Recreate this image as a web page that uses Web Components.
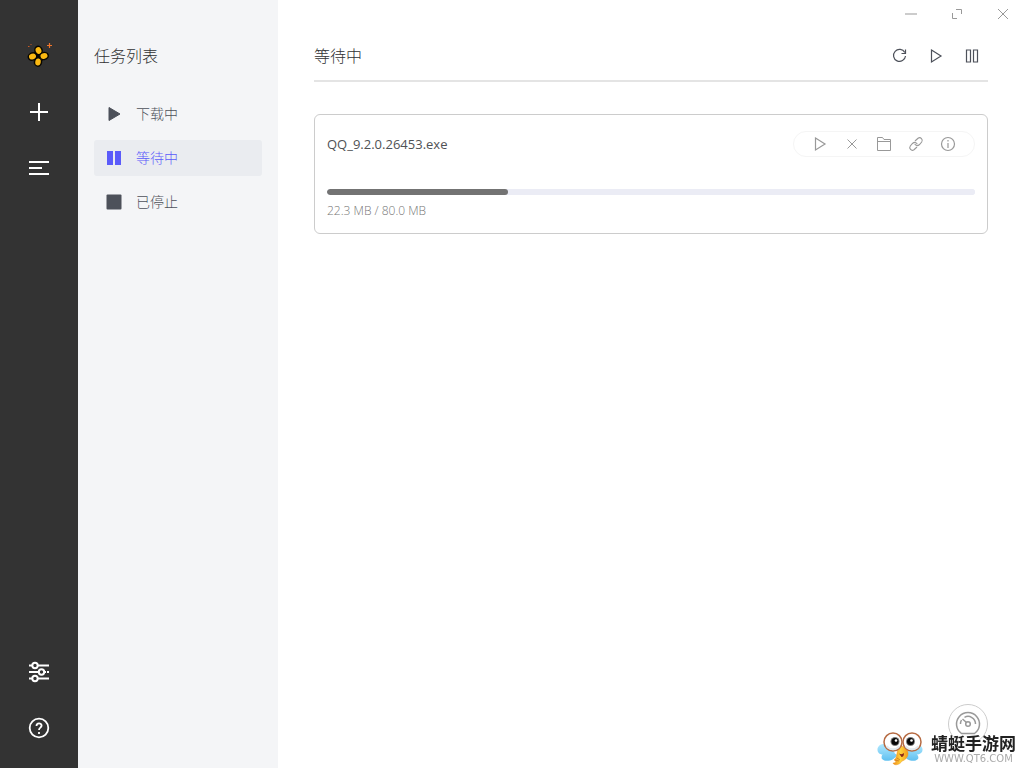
<!DOCTYPE html>
<html lang="zh-CN">
<head>
<meta charset="utf-8">
<title>任务列表</title>
<style>
html, body { margin: 0; height: 100%; }
body { font-family: "Noto Sans", "Noto Sans CJK SC", sans-serif; color: #303133; background: #fff; }
</style>
</head>
<body>
<download-app></download-app>
<script>
const svg = (size, body) =>
  `<svg width="${size}" height="${size}" viewBox="0 0 ${size} ${size}" fill="none" stroke="currentColor" aria-hidden="true">${body}</svg>`;
const base = `*{box-sizing:border-box}
button{font:inherit;color:inherit;background:none;border:0;padding:0;margin:0;display:flex;align-items:center;justify-content:center;cursor:pointer}
svg{display:block;flex:none}`;
const define = (name, css, html) => {
  customElements.define(name, class extends HTMLElement {
    connectedCallback() {
      if (this.shadowRoot) return;
      const root = this.attachShadow({ mode: 'open' });
      root.innerHTML = `<style>${base}${css}</style>${typeof html === 'function' ? html(this) : html}`;
    }
  });
};

const icons = {
  logo: svg(28, `<path d="M10 10L17 19M9 18L18 11" stroke="#080600" stroke-width="2.500"/>
    <g fill="#fbb912" stroke="#080600" stroke-width="1.500">
    <ellipse cx="13.500" cy="8.500" rx="3.600" ry="4.200" transform="rotate(-20 13.500 8.500)"/>
    <ellipse cx="19" cy="14" rx="4.300" ry="3.500" transform="rotate(-15 19 14)"/>
    <ellipse cx="13" cy="20" rx="3.500" ry="4.200" transform="rotate(10 13 20)"/>
    <ellipse cx="7.500" cy="14.500" rx="4.300" ry="3.600" transform="rotate(-20 7.500 14.500)"/></g>
    <path d="M24.500 1v5M22 3.500h5" stroke="#f0762b" stroke-width="1.200"/><path d="M3 4.500h1.500M5.500 2.500h1" stroke="#c95a24"/>`),
  plus: svg(24, `<path d="M12 3v18M3 12h18" stroke-width="2"/>`),
  list: svg(24, `<path d="M2 6h20M2 12h13M2 18h20" stroke-width="2"/>`),
  sliders: svg(24, `<g stroke-width="2"><path d="M2 5.500h3M11 5.500h11M2 12h10M18 12h1M20 12h2M2 18.500h3M11 18.500h11"/><circle cx="8" cy="5.500" r="2.700"/><circle cx="14.500" cy="12" r="2.700"/><circle cx="8" cy="18.500" r="2.700"/></g>`),
  help: svg(24, `<g stroke-width="1.800"><circle cx="12" cy="12" r="9.300"/><path d="M9.500 10C9.500 6.500 14.600 6.700 14.600 9.600C14.600 11.700 12 11.500 12 14"/><path d="M12 16v2"/></g>`),
  solidPlay: svg(16, `<path d="M3 1.500L14 8L3 14.500Z" fill="currentColor" stroke-linejoin="round"/>`),
  solidPause: svg(16, `<path d="M1 1h6v14h-6ZM9 1h6v14h-6Z" fill="currentColor" stroke="none"/>`),
  solidStop: svg(16, `<rect x=".5" y=".5" width="15" height="15" rx="1" fill="currentColor" stroke="none"/>`),
  refresh: svg(16, `<path d="M12.800 4.500A6 6 0 1 0 13.500 8M13.500 1.500V5.500H9.500" stroke-width="1.200"/>`),
  play: svg(16, `<path d="M3.500 2L13 8L3.500 14Z" stroke-width="1.200"/>`),
  pause: svg(16, `<path d="M2.500 2h4v12h-4ZM9.500 2h4v12h-4Z" stroke-width="1.200"/>`),
  cross: svg(16, `<path d="M3.500 3.500l9 9M12.500 3.500l-9 9"/>`),
  folder: svg(16, `<path d="M1.500 14.500V1.500H6.500L8 3.500H14.500V14.500ZM1.500 5.500H14.500"/>`),
  link: svg(16, `<path d="M7 5L10 2.300C12.500 .5 15.500 3.500 13.700 6L11.500 8.500C9.500 10.500 7.500 9.500 6.700 7.800M9 11L6 13.700C3.500 15.500 .5 12.500 2.300 10L4.500 7.500C6.500 5.500 8.500 6.500 9.300 8.200" stroke-width="1.100"/>`),
  info: svg(16, `<circle cx="8" cy="8" r="6.500" stroke-width="1.200"/><path d="M8 7v5M8 4v1.500" stroke-width="1.200"/>`),
  min: svg(12, `<path d="M0 6h12" stroke-width="2" opacity=".5"/>`),
  max: svg(12, `<path d="M5 1.500H10.500V6M1.500 5V10.500H6"/>`),
  close: svg(12, `<path d="M1 1l10 10M11 1L1 11"/>`),
  gauge: svg(28, `<g stroke-width="1.500"><path d="M7.500 23.500A11.500 11.500 0 1 1 20.500 23.500Z"/><path d="M6.500 14A7.500 7.500 0 0 1 7.500 10M10.500 7.300A7.500 7.500 0 0 1 21.500 14M8.500 9L12.500 12.500"/><circle cx="14" cy="14" r="2.300"/></g>`)
};

define('icon-button', `:host{display:block;height:24px}button{width:100%;height:100%}`,
  el => `<button type="button" aria-label="${el.getAttribute('label')}" title="${el.getAttribute('label')}">${icons[el.getAttribute('icon')]}</button>`);

define('app-rail', `:host{display:flex;flex-direction:column;justify-content:space-between;background:#333;color:#fff;padding:44px 0 28px}
nav{display:grid;gap:32px}`,
  `<nav aria-label="主菜单"><icon-button icon="logo" label="主页"></icon-button><icon-button icon="plus" label="新建任务"></icon-button><icon-button icon="list" label="任务"></icon-button></nav>
  <nav aria-label="设置"><icon-button icon="sliders" label="偏好设置"></icon-button><icon-button icon="help" label="帮助"></icon-button></nav>`);

define('nav-item', `:host{display:block}
a{display:flex;align-items:center;gap:14px;height:36px;padding:0 12px;border-radius:3px;font-size:14px;line-height:18px;font-weight:300;color:#4d515a;text-decoration:none}
:host([active]) a{background:#eaecf0;color:#5b5bfa}`,
  el => `<a href="#${el.getAttribute('to')}" ${el.hasAttribute('active') ? 'aria-current="page"' : ''}>${icons[el.getAttribute('icon')]}<slot></slot></a>`);

define('task-sidebar', `:host{display:block;background:#f4f5f7;padding:44px 16px}
h2{margin:0 0 28px;font-size:16px;line-height:24px;font-weight:300}nav{display:grid;gap:8px}`,
  `<h2>任务列表</h2><nav><nav-item to="active" icon="solidPlay">下载中</nav-item><nav-item to="waiting" icon="solidPause" active>等待中</nav-item><nav-item to="stopped" icon="solidStop">已停止</nav-item></nav>`);

define('window-controls', `:host{display:flex;justify-content:flex-end;gap:4px;height:28px;color:#999}icon-button{width:42px;height:28px}`,
  `<icon-button icon="min" label="最小化"></icon-button><icon-button icon="max" label="最大化"></icon-button><icon-button icon="close" label="关闭"></icon-button>`);

define('panel-header', `:host{display:flex;justify-content:space-between;padding:16px 0 12px;border-bottom:2px solid #e4e4e4}
h1{margin:0;font-size:16px;line-height:24px;font-weight:300}div{display:flex;gap:4px;color:#4d515a}icon-button{width:32px}`,
  `<h1><slot></slot></h1><div><icon-button icon="refresh" label="刷新"></icon-button><icon-button icon="play" label="全部开始"></icon-button><icon-button icon="pause" label="全部暂停"></icon-button></div>`);

define('task-card', `:host{display:block;border:1px solid #ccc;border-radius:6px;padding:16px 12px 14px}
header{display:flex;justify-content:space-between;align-items:center}
h3{margin:0;font:400 13px/26px "Open Sans",sans-serif;color:#505255}
.actions{display:flex;align-items:center;height:26px;padding:0 10px;border:1px solid #f5f5f5;border-radius:13px;color:#999}
icon-button{width:32px}
progress{display:block;width:100%;height:6px;margin:32px 0 8px;appearance:none;border:0;border-radius:3px;overflow:hidden;background:#ebecf5}
progress::-webkit-progress-bar{background:#ebecf5;border-radius:3px}
progress::-webkit-progress-value{background:#737373;border-radius:3px}
p{margin:0;font:300 12px/16px "Open Sans",sans-serif;color:#777}`,
  el => `<header><h3><slot></slot></h3><div class="actions"><icon-button icon="play" label="开始"></icon-button><icon-button icon="cross" label="删除"></icon-button><icon-button icon="folder" label="打开文件夹"></icon-button><icon-button icon="link" label="复制链接"></icon-button><icon-button icon="info" label="详情"></icon-button></div></header>
  <progress aria-label="下载进度" max="${el.getAttribute('total')}" value="${el.getAttribute('done')}"></progress>
  <p>${el.getAttribute('done')} MB / ${el.getAttribute('total')} MB</p>`);

define('speed-button', `:host{display:block;width:40px;height:40px;position:fixed;right:36px;bottom:24px}
button{width:40px;height:40px;border:1px solid #ccc;border-radius:50%;color:#999;background:#fff}`,
  `<button type="button" aria-label="速度">${icons.gauge}</button>`);

define('site-mark', `:host{position:fixed;right:8px;bottom:2px;display:flex;align-items:center;gap:8px}
.words{display:grid;justify-items:center}
b{font:700 17px/20px "Noto Sans CJK SC",sans-serif;color:#222}
small{font:10px/12px "DejaVu Sans",sans-serif;color:#aaa}`,
  `<svg width="46" height="34" viewBox="0 0 46 34" aria-hidden="true">
  <defs><linearGradient id="w" x2="0" y2="1"><stop stop-color="#b2e9ff"/><stop offset="1" stop-color="#5fc0f0"/></linearGradient><linearGradient id="t"><stop stop-color="#ee8618"/><stop offset=".5" stop-color="#ffd33b"/><stop offset="1" stop-color="#f49a1b"/></linearGradient></defs>
  <path d="M9 12C3 11 -1 16 1 20C3 24 12 24 18 21ZM16 20C8 19 3 23 5 27C9 31 18 28 20 23ZM37 12C43 11 47 16 45 20C42 24 34 23 28 21ZM29 20C37 19 43 23 41 27C37 31 29 28 26 23Z" fill="url(#w)"/>
  <path d="M21 15C23 13 27 14 30 18C33 23 29 28 25 29C23 33 17 34 16 31C19 31 20 29 17 28C20 27 20 20 21 15Z" fill="url(#t)" stroke="#ec9820" stroke-width=".5"/>
  <path d="M18 28l4 1M20 26l3 2" stroke="#c97520" stroke-width=".8"/><path d="M22 21.500Q25 23 27 21Q27 25 24.500 25Z" fill="#8c2818"/>
  <circle cx="16" cy="10" r="9" fill="#fff" stroke="#b66b43" stroke-width="1.500"/><circle cx="35" cy="10" r="9" fill="#fff" stroke="#b66b43" stroke-width="1.500"/>
  <path d="M9.500 14A8 8 0 0 0 22.500 14M28.500 14A8 8 0 0 0 41.500 14" fill="none" stroke="#e2eaef" stroke-width="2"/>
  <circle cx="18" cy="9.500" r="4.500" fill="#777"/><circle cx="33.500" cy="9.500" r="4.500" fill="#777"/><circle cx="18" cy="9.500" r="3.500" fill="#080808"/><circle cx="33.500" cy="9.500" r="3.500" fill="#080808"/><circle cx="19" cy="8.500" r="1.300" fill="#fff"/><circle cx="34.500" cy="8.500" r="1.300" fill="#fff"/>
  </svg><div class="words"><b>蜻蜓手游网</b><small>WWW.QT6.COM</small></div>`);

define('download-app', `:host{display:grid;grid-template-columns:78px 200px minmax(0,1fr);min-height:100vh}
.body{padding:0 36px}task-card{margin-top:32px}`,
  `<app-rail></app-rail><task-sidebar></task-sidebar><main><window-controls></window-controls><div class="body"><panel-header>等待中</panel-header><task-card done="22.3" total="80.0">QQ_9.2.0.26453.exe</task-card></div></main><speed-button></speed-button><site-mark></site-mark>`);
</script>
</body>
</html>
